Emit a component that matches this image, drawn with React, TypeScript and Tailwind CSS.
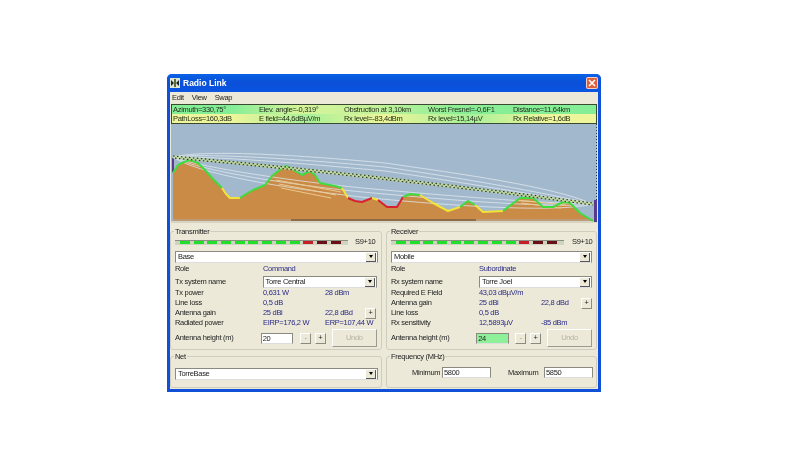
import type { FC, ReactNode } from 'react'

const green = '#3fdc3f'
const yellow = '#f2e23a'
const red = '#d8232f'

// terrain profile in plot coordinates, split by clearance colour
const profile: { color: string; pts: number[][] }[] = [
    { color: green, pts: [[2, 49], [7, 41], [13, 38], [19, 36], [27, 39], [34, 46], [43, 56], [51, 64]] },
    { color: yellow, pts: [[51, 64], [55, 70], [59, 74], [69, 74]] },
    { color: green, pts: [[69, 74], [75, 70], [82, 66], [94, 61], [101, 52], [111, 44], [116, 42], [126, 48], [131, 51], [139, 47], [144, 51], [149, 59], [164, 62], [171, 64]] },
    { color: yellow, pts: [[171, 64], [177, 74]] },
    { color: red, pts: [[177, 74], [184, 77], [191, 78], [201, 74]] },
    { color: yellow, pts: [[201, 74], [207, 76]] },
    { color: red, pts: [[207, 76], [216, 83], [226, 83], [232, 73]] },
    { color: green, pts: [[232, 73], [239, 70], [249, 71]] },
    { color: yellow, pts: [[249, 71], [262, 79], [277, 87], [289, 83]] },
    { color: green, pts: [[289, 83], [297, 77], [304, 81]] },
    { color: yellow, pts: [[304, 81], [312, 88], [332, 87]] },
    { color: green, pts: [[332, 87], [349, 74], [362, 74], [372, 83], [382, 83], [392, 78], [399, 79], [409, 89], [422, 97]] },
]

const terrain = profile.flatMap((s) => s.pts)
const toPath = (pts: number[][]) => pts.map((p) => p.join(',')).join(' ')

const Plot: FC = () => (
    <svg width="426" height="99" viewBox="0 0 426 99" className="block">
        <rect width="426" height="99" fill="#a2b9cd" />
        <polygon points={`2,97 ${toPath(terrain)} 422,97`} fill="#c98b46" />
        <rect x="2" y="95" width="420" height="2" fill="#bd9a78" />
        <rect x="120" y="95" width="185" height="2" fill="#8e6a48" />
        <rect x="0" y="97" width="426" height="2" fill="#d8d4c2" />
        <rect x="1" y="34" width="2" height="14" fill="#5a3a90" />
        <rect x="423" y="76" width="3" height="22" fill="#5a3a90" />
        <path d="M425.5,0 L425.5,76" stroke="#2a3550" strokeDasharray="1 2" fill="none" />
        {/* fresnel zones */}
        <g fill="none" stroke="#e3eaf0" strokeWidth="1" opacity="0.75">
            <path d="M2,33 C40,24 160,34 214,39 C290,50 380,62 422,80" />
            <path d="M2,33 C40,28 160,38 214,43 C290,54 370,68 422,80" />
            <path d="M2,33 C50,32 160,42 214,47 C290,58 370,72 422,80" />
            <path d="M2,33 C30,44 140,60 214,66 C300,74 390,80 422,80" />
            <path d="M2,33 C30,48 140,64 214,70 C300,78 390,84 422,80" />
            <path d="M2,33 C30,52 130,66 190,73 C300,84 390,88 422,80" />
        </g>
        <path d="M105,56 L170,68 M108,60 L165,71 M110,64 L160,74" stroke="#ecc98e" strokeWidth="1" fill="none" />
        <path d="M345,76 L395,81 M350,79 L390,84" stroke="#ecc98e" strokeWidth="1" fill="none" />
        {profile.map((s, i) => (
            <polyline key={i} points={toPath(s.pts)} fill="none" stroke={s.color} strokeWidth="2" strokeLinejoin="round" />
        ))}
        {/* line of sight, two offset dotted rows */}
        <path d="M2,33 Q210,52 422,80" stroke="#c3dc9a" strokeWidth="3" fill="none" opacity="0.8" />
        <path d="M2,32 Q210,51 422,79" stroke="#2c3a20" strokeWidth="1.2" strokeDasharray="1.5 2.5" fill="none" />
        <path d="M2,34 Q210,53 422,81" stroke="#2c3a20" strokeWidth="1.2" strokeDasharray="1.5 2.5" strokeDashoffset="2" fill="none" />
    </svg>
)

const statusRows = [
    {
        bg: 'bg-[linear-gradient(90deg,#84ee96_0%,#84ee96_14%,#d6f49a_30%,#c4f29a_48%,#8aee96_68%,#84ee96_100%)]',
        texts: ['Azimuth=330,75°', 'Elev. angle=-0,319°', 'Obstruction at 3,10km', 'Worst Fresnel=-0,6F1', 'Distance=11,64km'],
    },
    {
        bg: 'bg-[linear-gradient(90deg,#eef59a_0%,#eef59a_14%,#a8f098_32%,#eef59a_50%,#a8f098_70%,#eef59a_88%,#eef59a_100%)]',
        texts: ['PathLoss=160,3dB', 'E field=44,6dBµV/m', 'Rx level=-83,4dBm', 'Rx level=15,14µV', 'Rx Relative=1,6dB'],
    },
]
const statusWidths = ['w-[86px]', 'w-[85px]', 'w-[84px]', 'w-[85px]', 'w-[84px]']

const Group: FC<{ title: string; className: string; children: ReactNode }> = ({ title, className, children }) => (
    <div className={`relative border border-[#cfcdbd] rounded-[3px] ${className}`}>
        <span className="absolute left-[3px] -top-[5px] bg-[#ece9d8] px-[1px] text-[#222] leading-[9px]">{title}</span>
        {children}
    </div>
)

const Arrow: FC = () => (
    <span className="ml-auto flex items-center justify-center w-[10px] h-[9px] bg-[#ece9d8] border-r border-b border-[#555]">
        <span className="w-0 h-0 border-l-[2.5px] border-r-[2.5px] border-t-[3px] border-l-transparent border-r-transparent border-t-black" />
    </span>
)

const Combo: FC<{ value: string; className: string }> = ({ value, className }) => (
    <div className={`flex items-center h-[12px] bg-white border border-[#8a8a80] border-b-[#ddd] pl-[2px] pr-[1px] text-[#222] ${className}`}>
        {value}
        <Arrow />
    </div>
)

const SmallBtn: FC<{ label: string; disabled?: boolean }> = ({ label, disabled }) => (
    <div className={`flex items-center justify-center w-[11px] h-[11px] bg-[#ece9d8] border border-white border-r-[#8a8a80] border-b-[#8a8a80] leading-none ${disabled ? 'text-[#999]' : 'text-[#222]'}`}>
        {label}
    </div>
)

const Meter: FC<{ gap: string }> = ({ gap }) => (
    <div className="flex items-center h-[10px] mt-[5px] ml-[4px]">
        <div className="flex items-center gap-[3.7px] w-[173px] h-[5px] bg-[#cfd3bf] border-t border-[#8a9080] pl-[5px]">
            {Array.from({ length: 12 }).map((_, i) => (
                <span
                    key={i}
                    className={`h-[3px] w-[10px] shrink-0 ${i < 9 ? 'bg-[#22e02a]' : i === 9 ? 'bg-[#c8202a]' : 'bg-[#6a0f16]'}`}
                />
            ))}
        </div>
        <span className={`${gap} text-[#222]`}>S9+10</span>
    </div>
)

const Row: FC<{ label: string; value?: string; extra?: string; plus?: boolean; h: string }> = ({ label, value, extra, plus, h }) => (
    <div className={`flex items-center ${h}`}>
        <span className="w-[88px] text-[#222]">{label}</span>
        <span className="w-[62px] text-[#2a2a86] whitespace-nowrap">{value}</span>
        <span className="w-[40px] text-[#2a2a86] whitespace-nowrap">{extra}</span>
        {plus && <SmallBtn label="+" />}
    </div>
)

const HeightRow: FC<{ value: string; bg: string }> = ({ value, bg }) => (
    <div className="flex items-center h-[18px] mt-[1px]">
        <span className="w-[87px] text-[#222]">Antenna height (m)</span>
        <div className={`w-[33px] h-[11px] ${bg} border border-[#8a8a80] border-b-[#ddd] pl-[1px] leading-[9px] text-[#222]`}>{value}</div>
        <span className="w-[7px]" />
        <SmallBtn label="-" disabled />
        <span className="w-[4px]" />
        <SmallBtn label="+" />
        <div className="ml-[6px] w-[46px] h-[18px] flex items-center justify-center bg-[#ece9d8] border border-white border-r-[#9a9a8e] border-b-[#9a9a8e] text-[#b5b3a5]">Undo</div>
    </div>
)

const Field: FC<{ value: string }> = ({ value }) => (
    <div className="w-[49px] h-[11px] bg-white border border-[#8a8a80] border-b-[#ddd] pl-[1px] leading-[9px] text-[#222]">{value}</div>
)

const App: FC = () => {
    return (
        <div className="w-[800px] h-[450px] bg-white overflow-hidden pt-[74px] pl-[167px] text-[7.5px] tracking-[-0.3px] font-['Liberation_Sans',sans-serif]">
            <div className="flex flex-col w-[434px] h-[318px] bg-[#ece9d8] border-x-[3px] border-b-[3px] border-[#1050d8] rounded-t-[5px] blur-[0.3px]">
                {/* title bar */}
                <div className="flex items-center h-[18px] -mx-[3px] px-[3px] rounded-t-[5px] bg-gradient-to-b from-[#0b62e6] via-[#0a4fd8] to-[#0a56e2]">
                    <svg width="10" height="10" viewBox="0 0 10 10" className="shrink-0">
                        <rect width="10" height="10" fill="#dfe6d0" />
                        <path d="M1,2 L4,5 L1,8 Z M9,2 L6,5 L9,8 Z" fill="#1c2430" />
                        <rect x="4" y="1" width="2" height="8" fill="#5a6a3a" />
                    </svg>
                    <span className="ml-[3px] text-[8.5px] tracking-normal font-bold text-white">Radio Link</span>
                    <div className="ml-auto flex items-center justify-center w-[12px] h-[12px] rounded-[2px] bg-[#e0603a] border border-white/70">
                        <svg width="8" height="8" viewBox="0 0 8 8">
                            <path d="M1,1 L7,7 M7,1 L1,7" stroke="#fff" strokeWidth="1.6" />
                        </svg>
                    </div>
                </div>
                {/* menu */}
                <div className="flex items-center gap-[8px] h-[12px] pl-[2px] text-[#222]">
                    <span>Edit</span>
                    <span>View</span>
                    <span>Swap</span>
                </div>
                {/* status */}
                <div className="mx-[1px] border border-[#3a4a30]">
                    {statusRows.map((row, r) => (
                        <div key={r} className={`flex h-[9px] leading-[9px] ${row.bg}`}>
                            {row.texts.map((t, i) => (
                                <span key={t} className={`${statusWidths[i]} pl-[1px] whitespace-nowrap text-[#24301c]`}>{t}</span>
                            ))}
                        </div>
                    ))}
                </div>
                <div className="mx-[1px]">
                    <Plot />
                </div>
                {/* panels */}
                <div className="flex gap-[4px] mt-[8px]">
                    <div className="flex flex-col w-[212px] gap-[6px]">
                        <Group title="Transmitter" className="h-[119px]">
                            <Meter gap="ml-[7px]" />
                            <div className="px-[4px]">
                                <Combo value="Base" className="w-[203px] mt-[4px]" />
                                <Row label="Role" value="Command" h="h-[12px]" />
                                <div className="flex items-center h-[12px] mt-[1px]">
                                    <span className="w-[88px] text-[#222]">Tx system name</span>
                                    <Combo value="Torre Central" className="w-[115px]" />
                                </div>
                                <Row label="Tx power" value="0,631 W" extra="28 dBm" h="h-[10px]" />
                                <Row label="Line loss" value="0,5 dB" h="h-[10px]" />
                                <Row label="Antenna gain" value="25 dBi" extra="22,8 dBd" plus h="h-[10px]" />
                                <Row label="Radiated power" value="EIRP=176,2 W" extra="ERP=107,44 W" h="h-[10px]" />
                                <HeightRow value="20" bg="bg-white" />
                            </div>
                        </Group>
                        <Group title="Net" className="h-[32px]">
                            <div className="px-[4px] pt-[11px]">
                                <Combo value="TorreBase" className="w-[203px]" />
                            </div>
                        </Group>
                    </div>
                    <div className="flex flex-col w-[211px] gap-[6px]">
                        <Group title="Receiver" className="h-[119px]">
                            <Meter gap="ml-[8px]" />
                            <div className="px-[4px]">
                                <Combo value="Mobile" className="w-[201px] mt-[4px]" />
                                <Row label="Role" value="Subordinate" h="h-[12px]" />
                                <div className="flex items-center h-[12px] mt-[1px]">
                                    <span className="w-[88px] text-[#222]">Rx system name</span>
                                    <Combo value="Torre Joel" className="w-[113px]" />
                                </div>
                                <Row label="Required E Field" value="43,03 dBµV/m" h="h-[10px]" />
                                <Row label="Antenna gain" value="25 dBi" extra="22,8 dBd" plus h="h-[10px]" />
                                <Row label="Line loss" value="0,5 dB" h="h-[10px]" />
                                <Row label="Rx sensitivity" value="12,5893µV" extra="-85 dBm" h="h-[10px]" />
                                <HeightRow value="24" bg="bg-[#8ff09a]" />
                            </div>
                        </Group>
                        <Group title="Frequency (MHz)" className="h-[32px]">
                            <div className="flex items-center pt-[10px] pl-[25px]">
                                <span className="w-[30px] text-[#222]">Minimum</span>
                                <Field value="5800" />
                                <span className="ml-[17px] w-[36px] text-[#222]">Maximum</span>
                                <Field value="5850" />
                            </div>
                        </Group>
                    </div>
                </div>
            </div>
        </div>
    )
}

export default App
